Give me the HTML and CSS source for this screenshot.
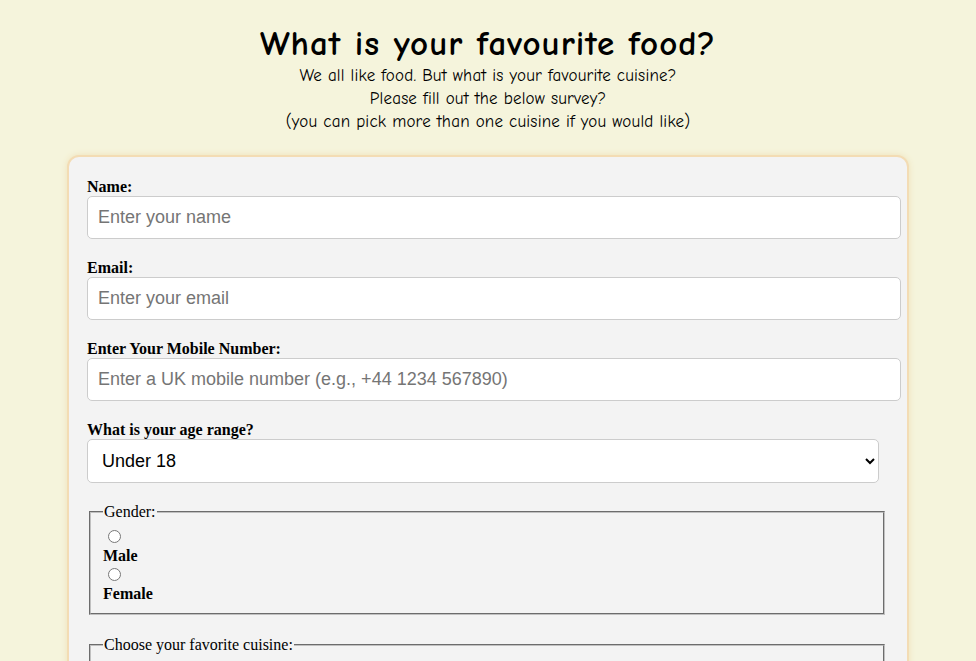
FILE: index.html
```html
<!DOCTYPE html>
<html lang="en">
<head>
<meta charset="utf-8">
<title>Food Survey</title>
<link rel="stylesheet" href="styles.css">
</head>
<body>
<header class="intro">
  <h1 class="title">What is your favourite food?</h1>
  <p class="subtitle">We all like food. But what is your favourite cuisine?<br>Please fill out the below survey?<br>(you can pick more than one cuisine if you would like)</p>
</header>
<form class="survey">
  <div class="group">
    <label class="field-label" for="name">Name:</label>
    <input class="text-input" id="name" type="text" placeholder="Enter your name">
  </div>
  <div class="group">
    <label class="field-label" for="email">Email:</label>
    <input class="text-input" id="email" type="email" placeholder="Enter your email">
  </div>
  <div class="group">
    <label class="field-label" for="phone">Enter Your Mobile Number:</label>
    <input class="text-input" id="phone" type="tel" placeholder="Enter a UK mobile number (e.g., +44 1234 567890)">
  </div>
  <div class="group">
    <label class="field-label" for="age">What is your age range?</label>
    <select class="select-input" id="age">
      <option>Under 18</option>
      <option>18-24</option>
      <option>25-34</option>
      <option>35-44</option>
      <option>45+</option>
    </select>
  </div>
  <fieldset class="box">
    <legend class="box-legend">Gender:</legend>
    <input class="radio" type="radio" name="gender" id="male"><label class="option-label" for="male">Male</label>
    <input class="radio" type="radio" name="gender" id="female"><label class="option-label" for="female">Female</label>
  </fieldset>
  <fieldset class="box">
    <legend class="box-legend">Choose your favorite cuisine:</legend>
    <input class="radio" type="checkbox" id="italian"><label class="option-label" for="italian">Italian</label>
    <input class="radio" type="checkbox" id="indian"><label class="option-label" for="indian">Indian</label>
  </fieldset>
</form>
</body>
</html>
```
FILE: styles.css
```css
body {
  margin: 8px;
  background: #f5f4dc;
  font-family: "Liberation Serif", "Times New Roman", serif;
  color: #000;
}
.intro {
  text-align: center;
  font-family: "Comic Sans MS", "Comic Neue", "DejaVu Sans", sans-serif;
}
.title {
  margin: 17px 0 0;
  font-size: 35px;
  line-height: 37px;
  letter-spacing: 1px;
  font-weight: bold;
}
.subtitle {
  margin: 2px 0 0;
  font-size: 17px;
  line-height: 23px;
  letter-spacing: 0.2px;
}
.survey {
  box-sizing: border-box;
  width: 842px;
  margin: 22px auto 0;
  padding: 21px 20px 20px 18px;
  background: #f3f3f3;
  border: 2px solid #f3dcb4;
  border-radius: 12px;
  box-shadow: 0 0 6px #efe1b9;
}
.group {
  margin-bottom: 20px;
}
.field-label {
  display: block;
  font-weight: bold;
  font-size: 16px;
  line-height: 18px;
}
.text-input {
  box-sizing: content-box;
  width: 792px;
  height: 21px;
  padding: 10px;
  border: 1px solid #ccc;
  border-radius: 5px;
  font-family: "Liberation Sans", Arial, sans-serif;
  font-size: 18px;
  background: #fff;
  margin: 0;
}
.text-input::placeholder {
  color: #757575;
}
.select-input {
  box-sizing: border-box;
  width: 792px;
  height: 44px;
  padding: 0 10px;
  border: 1px solid #ccc;
  border-radius: 5px;
  font-family: "Liberation Sans", Arial, sans-serif;
  font-size: 18px;
  background: #fff;
  margin: 0;
}
.box {
  margin: 0 2px 21px;
  padding: 6px 12px 10px;
  border: 2px groove #c0c0c0;
  font-size: 16px;
}
.box-legend {
  padding: 0 1px;
}
.radio {
  margin: 3px 3px 0 5px;
}
.option-label {
  display: block;
  font-weight: bold;
  line-height: 18px;
}
```
